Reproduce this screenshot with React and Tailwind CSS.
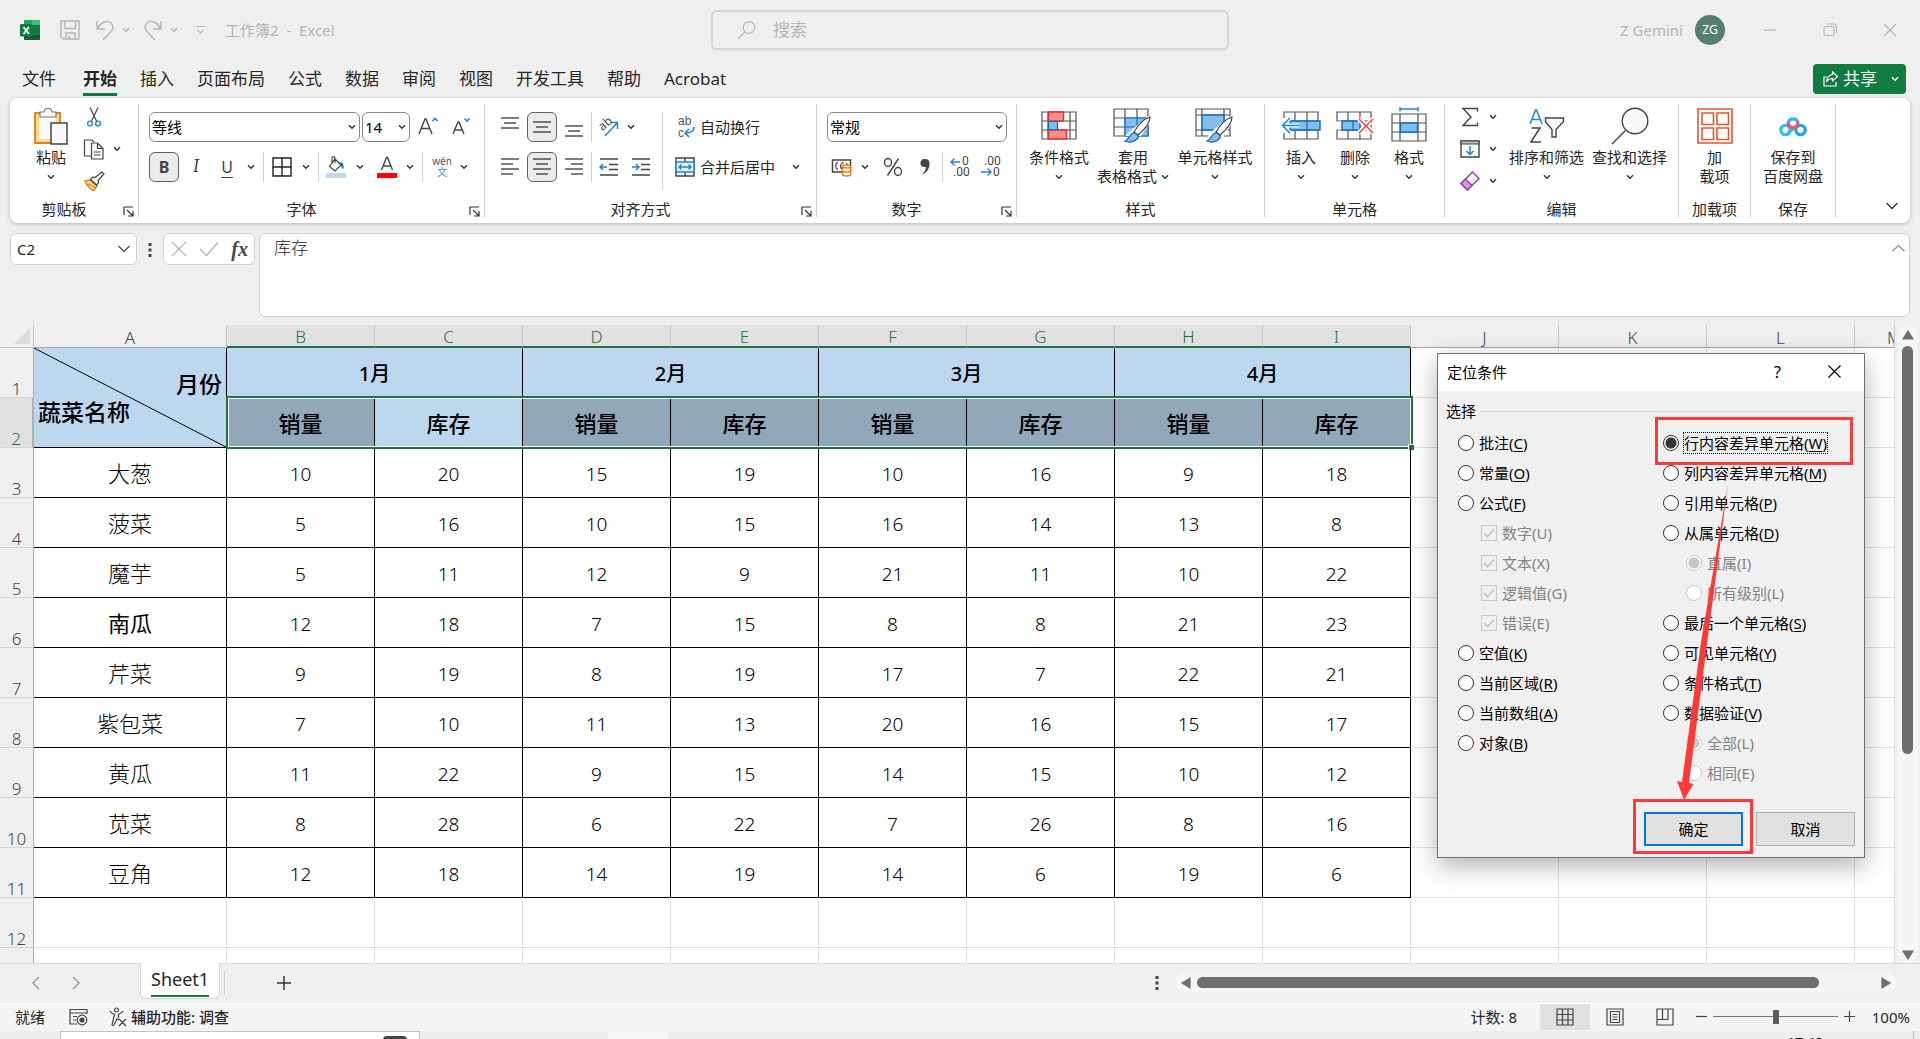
import React, { useState } from 'react';
import clsx from 'clsx';

const TABS = ['文件', '开始', '插入', '页面布局', '公式', '数据', '审阅', '视图', '开发工具', '帮助', 'Acrobat'];
const COLUMNS = ['A', 'B', 'C', 'D', 'E', 'F', 'G', 'H', 'I', 'J', 'K', 'L', 'M'];
const MONTHS = ['1月', '2月', '3月', '4月'];

const ROWS = [
  { name: '大葱', values: [10, 20, 15, 19, 10, 16, 9, 18] },
  { name: '菠菜', values: [5, 16, 10, 15, 16, 14, 13, 8] },
  { name: '魔芋', values: [5, 11, 12, 9, 21, 11, 10, 22] },
  { name: '南瓜', values: [12, 18, 7, 15, 8, 8, 21, 23], strong: true },
  { name: '芹菜', values: [9, 19, 8, 19, 17, 7, 22, 21] },
  { name: '紫包菜', values: [7, 10, 11, 13, 20, 16, 15, 17] },
  { name: '黄瓜', values: [11, 22, 9, 15, 14, 15, 10, 12] },
  { name: '苋菜', values: [8, 28, 6, 22, 7, 26, 8, 16] },
  { name: '豆角', values: [12, 18, 14, 19, 14, 6, 19, 6] },
];

const LEFT_OPTIONS = [
  { text: '批注', hotkey: 'C' },
  { text: '常量', hotkey: 'O' },
  { text: '公式', hotkey: 'F' },
  { text: '数字', hotkey: 'U', type: 'checkbox' },
  { text: '文本', hotkey: 'X', type: 'checkbox' },
  { text: '逻辑值', hotkey: 'G', type: 'checkbox' },
  { text: '错误', hotkey: 'E', type: 'checkbox' },
  { text: '空值', hotkey: 'K' },
  { text: '当前区域', hotkey: 'R' },
  { text: '当前数组', hotkey: 'A' },
  { text: '对象', hotkey: 'B' },
];

const RIGHT_OPTIONS = [
  { text: '行内容差异单元格', hotkey: 'W' },
  { text: '列内容差异单元格', hotkey: 'M' },
  { text: '引用单元格', hotkey: 'P' },
  { text: '从属单元格', hotkey: 'D' },
  { text: '直属', hotkey: 'I', group: 'level', on: true },
  { text: '所有级别', hotkey: 'L', group: 'level' },
  { text: '最后一个单元格', hotkey: 'S' },
  { text: '可见单元格', hotkey: 'Y' },
  { text: '条件格式', hotkey: 'T' },
  { text: '数据验证', hotkey: 'V' },
  { text: '全部', hotkey: 'L', group: 'validation', on: true },
  { text: '相同', hotkey: 'E', group: 'validation' },
];

const Svg = ({ w, h, children, className = '' }) => (
  <svg
    width={w}
    height={h}
    viewBox={`0 0 ${w} ${h}`}
    fill="none"
    stroke="#444"
    strokeWidth="1.2"
    className={`shrink-0 overflow-visible ${className}`}
    aria-hidden="true"
  >
    {children}
  </svg>
);

const Chevron = ({ color = '#333' }) => (
  <Svg w={8} h={6}>
    <path d="M1 1.2 4 4.2 7 1.2" stroke={color} strokeWidth="1.4" />
  </Svg>
);

const Tool = ({ label, active, className = '', children }) => (
  <button
    type="button"
    aria-label={label}
    className={clsx(
      'flex h-[30px] shrink-0 items-center justify-center rounded-md',
      active && 'border border-[#616161] bg-[#ebebeb]',
      className
    )}
  >
    {children}
  </button>
);

const Drop = ({ label, className = 'w-4' }) => (
  <Tool label={label} className={className}>
    <Chevron />
  </Tool>
);

const Sep = ({ className = 'w-2' }) => (
  <div className={`flex h-[30px] shrink-0 justify-center ${className}`}>
    <div className="w-px bg-[#d1d1d1]" />
  </div>
);

const Combo = ({ label, value, className = '' }) => (
  <div className={`relative shrink-0 ${className}`}>
    <select
      aria-label={label}
      className="h-[30px] w-full appearance-none rounded-md border border-[#8a8a8a] bg-white pl-0.5 text-[15px] leading-5 text-black"
    >
      <option>{value}</option>
    </select>
    <span className="pointer-events-none absolute top-3 right-1">
      <Chevron />
    </span>
  </div>
);

const RibbonGroup = ({ title, launcher, className = '', children }) => (
  <>
    <section className={`flex shrink-0 flex-col ${className}`}>
      <div className="h-[101px]">{children}</div>
      <div className={clsx('relative h-5 text-center text-[15px] leading-5 whitespace-nowrap', launcher && 'pr-5')}>
        {title}
        {launcher && (
          <button type="button" aria-label={`${title}设置`} className="absolute right-1 bottom-0.5">
            <Svg w={11} h={11}>
              <path d="M1 9V1h9M4 4l5.5 5.5M10 5v5H5" stroke="#333" />
            </Svg>
          </button>
        )}
      </div>
    </section>
    <div className="my-[6px] w-px shrink-0 bg-[#d1d1d1]" />
  </>
);

const BigButton = ({ icon, lines, drop, className = '' }) => (
  <button type="button" className={`flex flex-col items-center pt-[9px] text-[15px] leading-[19px] whitespace-nowrap ${className}`}>
    <span className="mb-1 flex h-[37px] items-center">{icon}</span>
    <span>{lines[0]}</span>
    <span className="flex h-[19px] items-center gap-1">
      {lines[1]}
      {drop && <Chevron />}
    </span>
  </button>
);

const Lines = ({ rows }) => (
  <Svg w={20} h={20}>
    {rows.map(([x1, x2, y]) => (
      <path key={y} d={`M${x1} ${y}H${x2}`} strokeWidth="1.4" />
    ))}
  </Svg>
);

/* ---------- ribbon icons ---------- */

const ExcelLogo = () => (
  <svg width="20" height="20" viewBox="0 0 20 20" aria-hidden="true">
    <rect x="4" y="0" width="16" height="20" rx="1.5" fill="#107c41" />
    <path d="M5.500 0H12v5H4V1.500A1.500 1.500 0 0 1 5.500 0Z" fill="#21a366" />
    <path d="M12 0h6.500A1.500 1.500 0 0 1 20 1.500V5h-8Z" fill="#33c481" />
    <path d="M4 10h8v5H4Z" fill="#185c37" />
    <path d="M4 15h16v3.500a1.500 1.500 0 0 1-1.500 1.500h-13A1.500 1.500 0 0 1 4 18.500Z" fill="#185c37" />
    <rect x="0" y="4" width="12.500" height="12.500" rx="1.200" fill="#107c41" />
    <path d="m3.500 7 5.500 7M9 7l-5.500 7" stroke="#fff" strokeWidth="1.900" />
  </svg>
);

const PasteIcon = () => (
  <Svg w={36} h={38}>
    <path d="M2 6h25v30H2z" fill="#ffd98f" stroke="#e67f17" strokeWidth="1.8" />
    <path d="M6 9h17v23H6z" fill="#fafafa" stroke="none" />
    <path d="M7 10V5h4c1-5 7-5 8 0h4v5z" fill="#fafafa" stroke="#777" />
    <path d="M18 16h16v21H18z" fill="#fafafa" stroke="#444" strokeWidth="1.5" />
  </Svg>
);

const CutIcon = () => (
  <Svg w={16} h={20}>
    <path d="M4 .5 10.500 14M12 .5 5.500 14" />
    <circle cx="4" cy="16.500" r="2.400" stroke="#1a86d0" strokeWidth="1.400" />
    <circle cx="12" cy="16.500" r="2.400" stroke="#1a86d0" strokeWidth="1.400" />
  </Svg>
);

const CopyIcon = () => (
  <Svg w={22} h={21}>
    <path d="M8 17H1.500V1H9l2 2" />
    <path d="M8.500 4h6l5.500 5.500V20H8.500zM14.500 4v5.500H20M11 13h6.500M11 16h6.500" fill="#fafafa" />
  </Svg>
);

const PainterIcon = () => (
  <Svg w={21} h={20}>
    <path d="m1 10 5-1 7 6-3.500 4.500C6 18 3 14.500 1 10Z" fill="#ffd98f" stroke="#e67f17" strokeWidth="1.500" />
    <path d="m4 13 7 3.500" stroke="#e67f17" />
    <path d="M6.500 8.500 9 6l2 .5L18 1l2 2-6 6.500.5 2-2 2.500z" fill="#fff" />
  </Svg>
);

const FillIcon = () => (
  <Svg w={20} h={22}>
    <path d="m9 3 6 6-6 6-5.500-4.500zM9 7V2.500C9 0 6 0 6 2.500V7" />
    <path d="M14 6c3 0 4 3 3.500 7-2-.5-2.500-3-3.500-7Z" fill="#1a6fb5" stroke="none" />
    <path d="M0 17h20v5H0z" fill="#bdd7ee" stroke="none" />
  </Svg>
);

const FontColorIcon = () => (
  <Svg w={20} h={22}>
    <path d="M4.500 14 9.500 1.500h1l5 12.500M6.500 10h7" strokeWidth="1.400" />
    <path d="M0 17h20v5H0z" fill="#f00" stroke="none" />
  </Svg>
);

const BordersIcon = () => (
  <Svg w={20} h={20}>
    <path d="M1 1h18v18H1zM10 1v18M1 10h18" stroke="#222" strokeWidth="1.400" />
  </Svg>
);

const OrientationIcon = () => (
  <Svg w={22} h={22}>
    <text x="1" y="12" fontSize="12" transform="rotate(-40 7 9)" fill="#444" stroke="none" fontFamily="Noto Sans">ab</text>
    <path d="M7 20 19 7M13 6.500h6.500V13" stroke="#1a86d0" strokeWidth="1.500" />
  </Svg>
);

const IndentIcon = ({ out }) => (
  <Svg w={20} h={20}>
    <path d="M1 2h18M10 7.500h9M10 12.500h9M1 18h18" strokeWidth="1.400" />
    <path d={out ? 'M8 10H1.500M4 7 1 10l3 3' : 'M1 10h6.500M5 7l3 3-3 3'} stroke="#1a86d0" strokeWidth="1.500" />
  </Svg>
);

const WrapIcon = () => (
  <Svg w={20} h={22}>
    <text x="3" y="9" fontSize="12" fill="#555" stroke="none" fontFamily="Liberation Sans">ab</text>
    <text x="3" y="21" fontSize="12" fill="#555" stroke="none" fontFamily="Liberation Sans">c</text>
    <path d="M19 11c0 4-2 6-8 6M14 13l-4 4 4 4" stroke="#1a86d0" strokeWidth="1.500" />
  </Svg>
);

const MergeIcon = () => (
  <Svg w={20} h={20}>
    <path d="M1 1h18v18H1zM10 1v4M10 15v4" strokeWidth="1.500" />
    <path d="M1 5h18v10H1z" fill="#e2f1fb" stroke="#1a86d0" strokeWidth="1.500" />
    <path d="M4 10h12M6.500 7.500 4 10l2.500 2.500M13.500 7.500 16 10l-2.500 2.500" stroke="#1a86d0" strokeWidth="1.400" />
  </Svg>
);

const CurrencyIcon = () => (
  <Svg w={22} h={20}>
    <path d="M1.500 3h18v12h-18z" strokeWidth="1.500" />
    <path d="M7 6c-3-1-3 7 0 6M13 6c-4-1-4 5-2 6M16 6v2" />
    <path d="M11.500 9.500v8c0 2 8 2 8 0v-8c0-2-8-2-8 0Z" fill="#fff" stroke="#e67f17" strokeWidth="1.400" />
    <path d="M11.500 9.500c0 2 8 2 8 0M11.500 13.500c0 2 8 2 8 0" stroke="#e67f17" strokeWidth="1.400" />
  </Svg>
);

const DecimalIcon = ({ more }) => (
  <Svg w={22} h={22}>
    <text x={more ? 13 : 4} y="9" fontSize="12" fill="#444" stroke="none" fontFamily="Roboto">{more ? '0' : '.00'}</text>
    <text x={more ? 4 : 13} y="20" fontSize="12" fill="#444" stroke="none" fontFamily="Roboto">{more ? '.00' : '0'}</text>
    <path d={more ? 'M11 6H2M5.500 2.500 2 6l3.500 3.500' : 'M1 16h10M7.500 12.500 11 16l-3.500 3.500'} stroke="#1a86d0" strokeWidth="1.400" />
  </Svg>
);

const Grid = () => <path d="M1 1h34v27H1zM1 10h34M1 19h34M12 1v27M24 1v27" fill="#fafafa" stroke="#555" />;

const ConditionalIcon = () => (
  <Svg w={36} h={29}>
    <path d="M1 1h34v27H1zM1 10h34M1 19h34M7 1v27M29 1v27" fill="#fafafa" stroke="#555" />
    <path d="M7.500 1h15v9h-15zM7.500 19h18v9h-18z" fill="#ff8f8f" stroke="#dd2f2f" strokeWidth="1.400" />
    <path d="M7.500 10.500h9v8h-9z" fill="#83beec" stroke="#0f6cbd" />
  </Svg>
);

const Brush = () => (
  <>
    <path d="M12 33c4-1 4-6 8-8 4-1 7 3 4 6-3 3-8 4-12 2Z" fill="#83beec" stroke="#0f6cbd" />
    <path d="M21 24c4-7 10-13 16-15 0 6-6 13-12 18Z" fill="#fff" stroke="#444" />
  </>
);

const TableStyleIcon = () => (
  <Svg w={40} h={35}>
    <Grid />
    <path d="M12 10h23v18H12z" fill="#83beec" stroke="none" />
    <path d="M12 28V10h23v18zM24 10v18M12 19h23" stroke="#0f6cbd" />
    <path d="M16 24 38 6v7L28 28H12Z" fill="#fff" stroke="none" />
    <Brush />
  </Svg>
);

const CellStyleIcon = () => (
  <Svg w={40} h={35}>
    <path d="M1 1h34v27H1zM1 7h34M1 22h34M7 1v27M29 1v27" fill="#fafafa" stroke="#555" />
    <path d="M7 7h22v15H7z" fill="#83beec" stroke="#0f6cbd" strokeWidth="1.400" />
    <path d="M16 24 38 6v7L28 30H12Z" fill="#fff" stroke="none" />
    <Brush />
  </Svg>
);

const InsertIcon = () => (
  <Svg w={40} h={29}>
    <path d="M3 1h34v27H3zM3 10h34M3 19h34M14 1v27M26 1v27" fill="#fafafa" stroke="#555" />
    <path d="M9 10h30v9H9z" fill="#83beec" stroke="#0f6cbd" strokeWidth="1.400" />
    <path d="M26 10v9" stroke="#0f6cbd" />
    <path d="M0 7h5v15H0z" fill="#fff" stroke="none" />
    <path d="M18 14.500H1.500M9 7l-7.500 7.500L9 22" stroke="#fff" strokeWidth="4" />
    <path d="M18 14.500H1.500M9 7l-7.500 7.500L9 22" stroke="#1a86d0" strokeWidth="1.500" />
  </Svg>
);

const DeleteIcon = () => (
  <Svg w={38} h={29}>
    <Grid />
    <path d="M0 10.500h6v8H0z" fill="#fff" stroke="none" />
    <path d="M6 10h18v9H6z" fill="#83beec" stroke="#0f6cbd" strokeWidth="1.400" />
    <path d="M17 10v9" stroke="#0f6cbd" />
    <path d="m23 8 14 14M37 8 23 22" stroke="#fff" strokeWidth="5" />
    <path d="m23 8 14 14M37 8 23 22" stroke="#f04747" strokeWidth="1.600" />
  </Svg>
);

const FormatIcon = () => (
  <Svg w={36} h={36} className="mb-1">
    <g transform="translate(0 7)">
      <path d="M1 1h34v27H1zM1 10h34M1 19h34M9 1v27M27 1v27" fill="#fafafa" stroke="#555" />
      <path d="M9.500 10h17v9h-17z" fill="#83beec" stroke="#0f6cbd" strokeWidth="1.400" />
    </g>
    <path d="M9 3h18M9 1v4.500M27 1v4.500" stroke="#1a86d0" strokeWidth="1.400" />
  </Svg>
);

const SigmaIcon = () => (
  <Svg w={18} h={20}>
    <path d="M16.500 4.500V1.500H2L10 10l-8 8.500h14.500v-3" strokeWidth="1.400" />
  </Svg>
);

const FillDownIcon = () => (
  <Svg w={20} h={18}>
    <path d="M1 1h18v16H1z" fill="#fafafa" strokeWidth="1.400" />
    <path d="M1 1h18v3H1z" fill="#bbb" />
    <path d="M10 6v8M6.500 11l3.500 3.500 3.500-3.500" stroke="#1a86d0" strokeWidth="1.500" />
  </Svg>
);

const EraserIcon = () => (
  <Svg w={20} h={20}>
    <path d="M1 12.500 12.500 1 19 7.500 7.500 19z" fill="#fafafa" stroke="#9a3ca5" strokeWidth="1.400" />
    <path d="M1 12.500 5.500 8l6.500 6.500L7.500 19z" fill="#d59bdc" stroke="#9a3ca5" strokeWidth="1.400" />
  </Svg>
);

const SortIcon = () => (
  <Svg w={36} h={36}>
    <path d="M1 16 6.500 2h1L13 16M3 11.500h8" stroke="#1a86d0" strokeWidth="1.500" />
    <path d="M2.500 20H11L2 34h10" strokeWidth="1.500" />
    <path d="M16.500 10h18v3.500L27 21.500V29h-4v-7.500l-6.500-8z" fill="#fafafa" strokeWidth="1.400" />
  </Svg>
);

const FindIcon = () => (
  <Svg w={38} h={38}>
    <circle cx="24" cy="14" r="12.800" fill="#fafafa" strokeWidth="1.400" />
    <path d="M14.500 23.500 1 37" strokeWidth="1.500" />
  </Svg>
);

const AddinsIcon = () => (
  <Svg w={36} h={36}>
    <path d="M1 1h34v34H1zM5 5h11.500v11.500H5zM20 5h11.500v11.500H20zM5 20h11.500v11.500H5zM20 20h11.500v11.500H20z" stroke="#e0592a" strokeWidth="1.600" />
  </Svg>
);

const BaiduIcon = () => (
  <Svg w={28} h={22}>
    <circle cx="6.500" cy="15" r="4.700" stroke="#2fc0f5" strokeWidth="3.300" />
    <circle cx="21.500" cy="15" r="4.700" stroke="#1aa5fa" strokeWidth="3.300" />
    <path d="m9 18 6-5.500" stroke="#2fb4f7" strokeWidth="3.300" />
    <path d="M9.300 7.500a4.900 4.900 0 0 1 9.500 0" stroke="#33b7f6" strokeWidth="3.300" />
    <path d="M9.300 7a4.800 4.800 0 1 0 9.400 0" stroke="#f9506e" strokeWidth="3.300" />
  </Svg>
);

/* ---------- window sections ---------- */

const TitleBar = () => (
  <header className="flex h-[60px] shrink-0 items-center pl-5 text-[#b5b5b5]">
    <div className="flex min-w-0 flex-1 items-center">
      <ExcelLogo />
      <button type="button" aria-label="保存" className="ml-5">
        <Svg w={20} h={20}>
          <path d="M1 1h18v18H3.500L1 16.500zM5 1v7.500h10.500V1M6 19v-6h9v6M9 19v-3.500" stroke="#b5b5b5" strokeWidth="1.400" />
        </Svg>
      </button>
      <button type="button" aria-label="撤消" className="ml-4">
        <Svg w={18} h={21}>
          <path d="M1 1v8h8M1.500 8.500C5 2 11-.500 15 3c3 3.500 2 6.500-.500 9L7 20" stroke="#b5b5b5" strokeWidth="1.400" />
        </Svg>
      </button>
      <span className="ml-2 flex w-2"><Chevron color="#b5b5b5" /></span>
      <button type="button" aria-label="恢复" className="ml-[14px]">
        <Svg w={18} h={21}>
          <path d="M17 1v8H9M16.500 8.500C13 2 7-.500 3 3c-3 3.500-2 6.500.500 9L11 20" stroke="#b5b5b5" strokeWidth="1.400" />
        </Svg>
      </button>
      <span className="ml-2 flex w-2"><Chevron color="#b5b5b5" /></span>
      <button type="button" aria-label="自定义快速访问工具栏" className="ml-[18px]">
        <Svg w={9} h={10}>
          <path d="M0 1.500h9M1.500 5l3 3 3-3" stroke="#b5b5b5" />
        </Svg>
      </button>
      <h1 className="ml-5 text-[15px] whitespace-pre">工作簿2  -  Excel</h1>
    </div>
    <label className="flex h-10 w-[518px] items-center rounded-md border-2 border-[#d6d6d6] pl-6 shadow-xs">
      <Svg w={20} h={20}>
        <circle cx="12" cy="7.500" r="5.800" stroke="#b5b5b5" />
        <path d="M8 12 1 19" stroke="#b5b5b5" />
      </Svg>
      <input aria-label="搜索" placeholder="搜索" className="ml-4 min-w-0 flex-1 bg-transparent text-[17px] outline-none placeholder:text-[#b5b5b5]" />
    </label>
    <div className="flex min-w-0 flex-1 items-center justify-end">
      <span className="text-[15px]">Z Gemini</span>
      <span className="ml-3 flex size-[30px] items-center justify-center rounded-full bg-[#567d72] text-xs text-white">ZG</span>
      <div className="ml-[15px] flex">
        <button type="button" aria-label="最小化" className="flex h-8 w-[60px] items-center justify-center">
          <Svg w={14} h={14}><path d="M1 7h12" stroke="#b5b5b5" /></Svg>
        </button>
        <button type="button" aria-label="还原" className="flex h-8 w-[60px] items-center justify-center">
          <Svg w={14} h={14}>
            <path d="M3 3.500h6.500q1.500 0 1.500 1.500v6q0 1.500-1.500 1.500h-7Q1 12.500 1 11V5q0-1.500 2-1.500ZM4 1h6q3.500 0 3.500 3.500V10" stroke="#b5b5b5" />
          </Svg>
        </button>
        <button type="button" aria-label="关闭" className="flex h-8 w-[60px] items-center justify-center">
          <Svg w={14} h={14}><path d="m1 1 12 12M13 1 1 13" stroke="#b5b5b5" /></Svg>
        </button>
      </div>
    </div>
  </header>
);

const TabBar = () => (
  <nav className="flex h-[38px] shrink-0 items-start justify-between pt-1 pr-[14px] pl-[22px]">
    <div className="flex gap-[23px] text-[17px] leading-[30px] whitespace-nowrap">
      {TABS.map((tab, i) => (
        <a
          key={tab}
          href="#"
          className={clsx('h-8', i === 1 && 'ml-1 border-b-3 border-[#107c41] font-bold')}
        >
          {tab}
        </a>
      ))}
    </div>
    <button type="button" className="flex h-[30px] items-center rounded bg-[#107c41] pr-[7px] pl-2.5 text-[17px] text-white">
      <Svg w={15} h={16}>
        <path d="M4 6H1v9h12v-4M9.500 1l5 4.500-5 4.500V7.500C7 7.500 5 8.500 3.500 11 4 7 6 4 9.500 3.500z" stroke="#fff" />
      </Svg>
      <span className="mr-3.5 ml-[5px]">共享</span>
      <Chevron color="#fff" />
    </button>
  </nav>
);

const IconColumn = ({ items }) => (
  <div className="flex flex-col pt-[3px]">
    {items.map(([label, icon, drop]) => (
      <div key={label} className="flex h-8 items-center">
        <Tool label={label} className="w-[26px]">{icon}</Tool>
        {drop && <Drop label={`${label}选项`} className="w-5" />}
      </div>
    ))}
  </div>
);

const Ribbon = () => (
  <div className="relative mx-2.5 flex h-[125px] shrink-0 rounded-lg bg-white shadow-[0_1px_4px_rgba(0,0,0,0.25)]">
    <RibbonGroup title="剪贴板" launcher className="w-32">
      <div className="flex pl-[11px]">
        <BigButton className="w-[60px]" icon={<PasteIcon />} lines={['粘贴']} drop />
        <IconColumn
          items={[
            ['剪切', <CutIcon />, false],
            ['复制', <CopyIcon />, true],
            ['格式刷', <PainterIcon />, false],
          ]}
        />
      </div>
    </RibbonGroup>

    <RibbonGroup title="字体" launcher className="w-[345px]">
      <div className="flex flex-col gap-2.5 pt-[14px] pl-2.5">
        <div className="flex">
          <Combo label="字体" value="等线" className="w-[211px]" />
          <Combo label="字号" value="14" className="ml-0.5 w-12" />
          <Tool label="增大字号" className="w-9">
            <Svg w={20} h={20}>
              <path d="M1 17 7 2h1l6 15M3.500 11.500h8.500" strokeWidth="1.400" />
              <path d="M14.500 4 17 1.500 19.500 4" stroke="#1a86d0" strokeWidth="1.600" />
            </Svg>
          </Tool>
          <Tool label="减小字号" className="w-[30px]">
            <Svg w={20} h={20}>
              <path d="M2 17 7 5h1l5 12M4 13h7" strokeWidth="1.400" />
              <path d="M13.500 1.500 16 4l2.500-2.500" stroke="#1a86d0" strokeWidth="1.600" />
            </Svg>
          </Tool>
        </div>
        <div className="flex">
          <Tool label="加粗" active className="w-[30px] text-base font-bold text-[#444]">B</Tool>
          <Tool label="倾斜" className="w-[34px] font-serif text-lg text-[#444] italic">I</Tool>
          <Tool label="下划线" className="w-7 text-base text-[#444] underline underline-offset-4">U</Tool>
          <Drop label="下划线选项" className="w-5" />
          <Sep className="w-[5px]" />
          <Tool label="边框" className="w-8"><BordersIcon /></Tool>
          <Drop label="边框选项" />
          <Sep />
          <Tool label="填充颜色" className="w-7"><FillIcon /></Tool>
          <Drop label="填充颜色选项" className="w-5" />
          <Tool label="字体颜色" className="w-[34px]"><FontColorIcon /></Tool>
          <Drop label="字体颜色选项" className="w-3" />
          <Sep className="w-3" />
          <Tool label="拼音" className="w-7 flex-col text-[10px] leading-[11px] text-[#555]">
            <span>wén</span>
            <span className="text-[#3a96dd]">文</span>
          </Tool>
          <Drop label="拼音选项" />
        </div>
      </div>
    </RibbonGroup>

    <RibbonGroup title="对齐方式" launcher className="w-[331px]">
      <div className="flex pt-[14px] pl-[9px]">
        <div className="flex flex-col gap-2.5">
          <div className="flex">
            <Tool label="顶端对齐" className="w-8"><Lines rows={[[1, 19, 1], [4, 16, 6], [1, 19, 11]]} /></Tool>
            <Tool label="垂直居中" active className="mx-px w-[30px]"><Lines rows={[[1, 19, 5], [4, 16, 10], [1, 19, 15]]} /></Tool>
            <Tool label="底端对齐" className="w-8"><Lines rows={[[1, 19, 9], [4, 16, 14], [1, 19, 19]]} /></Tool>
            <Sep className="w-[3px]" />
            <Tool label="方向" className="w-8"><OrientationIcon /></Tool>
            <Drop label="方向选项" className="w-3" />
          </div>
          <div className="flex">
            <Tool label="左对齐" className="w-8"><Lines rows={[[1, 19, 2], [1, 13, 7], [1, 19, 12], [1, 13, 17]]} /></Tool>
            <Tool label="居中" active className="mx-px w-[30px]"><Lines rows={[[1, 19, 2], [4, 16, 7], [1, 19, 12], [4, 16, 17]]} /></Tool>
            <Tool label="右对齐" className="w-8"><Lines rows={[[1, 19, 2], [7, 19, 7], [1, 19, 12], [7, 19, 17]]} /></Tool>
            <Sep className="w-[3px]" />
            <Tool label="减少缩进量" className="w-8"><IndentIcon out /></Tool>
            <Tool label="增加缩进量" className="w-8"><IndentIcon /></Tool>
          </div>
        </div>
        <div className="ml-[5px] h-[78px] w-px bg-[#d1d1d1]" />
        <div className="flex flex-col gap-2.5 pl-3 text-[15px] whitespace-nowrap">
          <button type="button" className="flex h-[30px] items-center gap-[5px]">
            <WrapIcon />
            自动换行
          </button>
          <button type="button" className="flex h-[30px] items-center gap-[5px]">
            <MergeIcon />
            合并后居中
            <span className="ml-3"><Chevron /></span>
          </button>
        </div>
      </div>
    </RibbonGroup>

    <RibbonGroup title="数字" launcher className="w-[199px]">
      <div className="flex flex-col gap-2.5 pt-[14px] pl-2.5">
        <Combo label="数字格式" value="常规" className="w-[180px]" />
        <div className="flex">
          <Tool label="会计数字格式" className="w-[30px]"><CurrencyIcon /></Tool>
          <Drop label="会计数字格式选项" />
          <Tool label="百分比样式" className="w-10">
            <Svg w={20} h={20}>
              <path d="M15.500 1.500 4.500 18.500" strokeWidth="1.400" />
              <ellipse cx="5" cy="5.500" rx="3.500" ry="4" strokeWidth="1.400" />
              <ellipse cx="15" cy="14.500" rx="3.500" ry="4" strokeWidth="1.400" />
            </Svg>
          </Tool>
          <Tool label="千位分隔样式" className="w-6">
            <Svg w={12} h={18}>
              <path d="M6 1a4 4 0 1 1-1 8 3.900 3.900 0 0 1 1-8Zm0 0c5 0 5.500 5 3.500 9.500Q8 14.500 3 16.500q4-4 4-8z" fill="#444" stroke="none" />
            </Svg>
          </Tool>
          <Sep className="w-2.5" />
          <Tool label="增加小数位数" className="w-[26px]"><DecimalIcon more /></Tool>
          <Tool label="减少小数位数" className="w-9"><DecimalIcon /></Tool>
        </div>
      </div>
    </RibbonGroup>

    <RibbonGroup title="样式" className="w-[247px]">
      <div className="flex pl-[6px]">
        <BigButton className="w-[72px]" icon={<ConditionalIcon />} lines={['条件格式']} drop />
        <BigButton className="w-[76px]" icon={<TableStyleIcon />} lines={['套用', '表格格式']} drop />
        <BigButton className="w-[88px]" icon={<CellStyleIcon />} lines={['单元格样式']} drop />
      </div>
    </RibbonGroup>

    <RibbonGroup title="单元格" className="w-[179px]">
      <div className="flex pl-[9px]">
        <BigButton className="w-[54px]" icon={<InsertIcon />} lines={['插入']} drop />
        <BigButton className="w-[54px]" icon={<DeleteIcon />} lines={['删除']} drop />
        <BigButton className="w-[54px]" icon={<FormatIcon />} lines={['格式']} drop />
      </div>
    </RibbonGroup>

    <RibbonGroup title="编辑" className="w-[233px]">
      <div className="flex pl-3">
        <IconColumn
          items={[
            ['自动求和', <SigmaIcon />, true],
            ['填充', <FillDownIcon />, true],
            ['清除', <EraserIcon />, true],
          ]}
        />
        <div className="flex pl-0.5">
          <BigButton className="w-[83px]" icon={<SortIcon />} lines={['排序和筛选']} drop />
          <BigButton className="w-[83px]" icon={<FindIcon />} lines={['查找和选择']} drop />
        </div>
      </div>
    </RibbonGroup>

    <RibbonGroup title="加载项" className="w-[71px]">
      <BigButton className="w-full" icon={<AddinsIcon />} lines={['加', '载项']} />
    </RibbonGroup>

    <RibbonGroup title="保存" className="w-[84px]">
      <BigButton className="w-full" icon={<BaiduIcon />} lines={['保存到', '百度网盘']} />
    </RibbonGroup>

    <button type="button" aria-label="折叠功能区" className="mr-3 mb-[13px] ml-auto self-end">
      <Svg w={12} h={8}><path d="m.500 1 5.500 5.500L11.500 1" stroke="#333" strokeWidth="1.400" /></Svg>
    </button>
  </div>
);

const FormulaBar = () => (
  <div className="mt-2.5 flex h-[92px] shrink-0 items-start pr-2.5 pb-2 pl-2.5">
    <div className="flex h-8 w-[127px] items-center rounded-md border border-[#d1d1d1] bg-white pr-[6px] pl-[6px]">
      <input aria-label="名称框" defaultValue="C2" className="min-w-0 flex-1 bg-transparent text-[15px] outline-none" />
      <Svg w={12} h={8}><path d="m.500 1 5.500 5.500L11.500 1" stroke="#444" /></Svg>
    </div>
    <Svg w={4} h={14} className="mx-[11px] mt-[10px]">
      <path d="M.500 0h3v3h-3zM.500 5.500h3v3h-3zM.500 11h3v3h-3z" fill="#444" stroke="none" />
    </Svg>
    <div className="flex h-8 w-[92px] items-center justify-between rounded-md border border-[#d1d1d1] bg-white pr-[6px] pl-[7px]">
      <button type="button" aria-label="取消输入">
        <Svg w={16} h={16}><path d="m1 1 14 14M15 1 1 15" stroke="#b5b5b5" /></Svg>
      </button>
      <button type="button" aria-label="输入">
        <Svg w={20} h={16}><path d="m1 8 6.500 6.500L19 1.500" stroke="#b5b5b5" strokeWidth="1.400" /></Svg>
      </button>
      <button type="button" aria-label="插入函数" className="font-['Liberation_Serif',serif] text-xl leading-6 font-bold text-[#444] italic">fx</button>
    </div>
    <div className="ml-1 flex h-[84px] flex-1 items-start rounded-md border border-[#d1d1d1] bg-white">
      <textarea aria-label="编辑栏" defaultValue="库存" className="h-full flex-1 resize-none px-3.5 text-[17px] leading-[28px] font-light outline-none" />
      <button type="button" aria-label="折叠编辑栏" className="mt-2.5 mr-1">
        <Svg w={13} h={8}><path d="m.500 7 6-5.500 6 5.500" stroke="#888" /></Svg>
      </button>
    </div>
  </div>
);

const RowHeader = ({ n, selected }) => (
  <th
    className={clsx(
      'border-r border-b border-r-[#b1b1b1] border-b-[#d4d4d4] p-0 align-bottom text-[17px] leading-4 font-light',
      selected ? 'border-r-2 border-r-[#217346] bg-[#e1e1e1] text-[#217346]' : 'bg-[#efefef] text-[#444]'
    )}
  >
    {n}
  </th>
);

const EmptyCells = ({ count }) =>
  Array.from({ length: count }, (_, i) => <td key={i} className="border-r border-b border-[#e0e0e0]" />);

const Sheet = () => (
  <div className="relative min-w-0 flex-1 overflow-hidden bg-white">
    <table className="w-full table-fixed border-separate border-spacing-0 text-center">
      <colgroup>
        <col className="w-[34px]" />
        <col className="w-[193px]" />
        {COLUMNS.slice(1, 12).map((c) => <col key={c} className="w-[148px]" />)}
        <col />
      </colgroup>
      <thead>
        <tr className="h-[23px]">
          <th className="border-r border-b border-[#c6c6c6] bg-[#efefef]">
            <Svg w={16} h={16} className="ml-auto mr-[3px]">
              <path d="M16 0v16H0z" fill="#dcdcdc" stroke="none" />
            </Svg>
          </th>
          {COLUMNS.map((c, i) => {
            const selected = i > 0 && i < 9;
            return (
              <th
                key={c}
                className={clsx(
                  'h-[23px] border-r border-r-[#c6c6c6] p-0 pt-[3px] text-[17px] leading-[18px] font-light',
                  selected ? 'border-b-2 border-b-[#217346] bg-[#e1e1e1] text-[#217346]' : 'border-b border-b-[#a6a6a6] bg-[#efefef] text-[#444]',
                  c === 'M' && 'overflow-hidden pl-8 text-left'
                )}
              >
                {c}
              </th>
            );
          })}
        </tr>
      </thead>
      <tbody className="text-black">
        <tr className="h-[50px]">
          <RowHeader n={1} />
          <td rowSpan={2} className="relative border-r border-b border-black bg-[#bdd7ee] p-0 text-[23px] leading-7 font-medium">
            <svg className="absolute inset-0 size-full" viewBox="0 0 192 99" preserveAspectRatio="none" aria-hidden="true">
              <path d="M0 0 192 99" stroke="#000" strokeWidth="1" />
            </svg>
            <div className="pr-1 text-right">月份</div>
            <div className="pl-1 text-left">蔬菜名称</div>
          </td>
          {MONTHS.map((m) => (
            <td key={m} colSpan={2} className="border-r border-b border-black bg-[#bdd7ee] p-0 pt-0.5 text-xl font-medium">{m}</td>
          ))}
          <EmptyCells count={4} />
        </tr>
        <tr className="h-[50px]">
          <RowHeader n={2} selected />
          {Array.from({ length: 8 }, (_, i) => (
            <td
              key={i}
              className={clsx('border-r border-b border-black p-0 text-[22px] leading-8 font-medium', i === 1 ? 'bg-[#bdd7ee]' : 'bg-[#93a7bb]')}
            >
              {i % 2 === 0 ? '销量' : '库存'}
            </td>
          ))}
          <EmptyCells count={4} />
        </tr>
        {ROWS.map((row, r) => (
          <tr key={row.name} className="h-[50px]">
            <RowHeader n={r + 3} />
            <td className={clsx('border-r border-b border-black p-0 text-[22px] leading-8', row.strong ? 'font-normal' : 'font-light')}>{row.name}</td>
            {row.values.map((v, i) => (
              <td key={i} className="border-r border-b border-black p-0 pt-0.5 text-[19px] leading-8 font-light">{v}</td>
            ))}
            <EmptyCells count={4} />
          </tr>
        ))}
        {[12, 13].map((n) => (
          <tr key={n} className="h-[50px]">
            <RowHeader n={n === 12 ? n : ''} />
            <EmptyCells count={13} />
          </tr>
        ))}
      </tbody>
    </table>
    {/* selection frame around B2:I2 */}
    <div className="pointer-events-none absolute top-[71px] left-[226px] h-[53px] w-[1187px] border-2 border-[#217346]">
      <div className="size-full border border-white" />
      <span className="absolute -right-[3px] -bottom-[3px] size-[6px] border-t border-l border-white bg-[#217346]" />
    </div>
  </div>
);

const VerticalScroll = () => (
  <div className="flex w-[25px] shrink-0 justify-center bg-[#efefef]">
    <div className="flex w-5 flex-col items-center rounded-full bg-[#f5f5f5] pt-[5px] pb-[3px]">
      <Svg w={12} h={10}><path d="M6 1 11 9H1z" fill="#6e6e6e" stroke="#6e6e6e" /></Svg>
      <div className="mt-[6px] h-[408px] w-[11px] rounded-full bg-[#6e6e6e]" />
      <Svg w={12} h={10} className="mt-auto"><path d="M6 9 11 1H1z" fill="#6e6e6e" stroke="#6e6e6e" /></Svg>
    </div>
  </div>
);

const SheetTabs = () => (
  <div className="flex h-10 shrink-0 items-start border-t border-[#dcdcdc] pr-[23px]">
    <button type="button" aria-label="上一张" className="ml-8 h-[38px]">
      <Svg w={8} h={14}><path d="M7 1 1 7l6 6" stroke="#999" strokeWidth="1.400" /></Svg>
    </button>
    <button type="button" aria-label="下一张" className="ml-8 h-[38px]">
      <Svg w={8} h={14}><path d="m1 1 6 6-6 6" stroke="#999" strokeWidth="1.400" /></Svg>
    </button>
    <button type="button" className="-mt-px ml-[60px] h-9 rounded-b-md border border-t-0 border-[#d6d6d6] bg-white px-2.5 text-lg leading-7">
      <span className="block h-[33px] border-b-2 border-[#107c41] pt-px">Sheet1</span>
    </button>
    <div className="mt-[7px] ml-1 h-6 w-px bg-[#d1d1d1]" />
    <button type="button" aria-label="新工作表" className="ml-[52px] h-[38px]">
      <Svg w={14} h={14}><path d="M7 0v14M0 7h14" stroke="#333" strokeWidth="1.500" /></Svg>
    </button>
    <Svg w={4} h={14} className="mt-3 ml-auto">
      <path d="M.500 0h3v3h-3zM.500 5.500h3v3h-3zM.500 11h3v3h-3z" fill="#444" stroke="none" />
    </Svg>
    <div className="mt-2 ml-4 flex h-[21px] w-[722px] items-center rounded-full bg-[#f5f5f5] px-[6px]">
      <Svg w={10} h={12}><path d="M1 6 9 1v10z" fill="#6e6e6e" stroke="#6e6e6e" /></Svg>
      <div className="ml-[6px] h-[11px] w-[622px] rounded-full bg-[#6e6e6e]" />
      <Svg w={10} h={12} className="ml-auto"><path d="M9 6 1 1v10z" fill="#6e6e6e" stroke="#6e6e6e" /></Svg>
    </div>
  </div>
);

const StatusBar = () => (
  <footer className="flex h-7 shrink-0 items-center border-t border-white bg-[#f4f4f4] pr-2.5 pb-0.5 pl-[15px] text-[15px] leading-5 whitespace-nowrap">
    <span>就绪</span>
    <Svg w={20} h={18} className="ml-6">
      <path d="M8 16H1V1.500h17V6M1 5h17M4 8.500h4M4 12h3" />
      <circle cx="13" cy="12" r="4.800" />
      <circle cx="13" cy="12" r="2" fill="#444" />
    </Svg>
    <button type="button" className="ml-5 flex items-center gap-1 font-medium">
      <Svg w={18} h={20}>
        <circle cx="7.500" cy="3" r="2" />
        <path d="M1 4q1 2 4.500 3.500L3 18q1 1.500 2 0l3-6 1.500 1M14 4q-1 2-4.500 3.500V11M10 12l7 7M17 12l-7 7" />
      </Svg>
      辅助功能: 调查
    </button>
    <span className="ml-auto">计数: 8</span>
    <button type="button" aria-label="普通" className="ml-[23px] flex h-[26px] w-[50px] items-center justify-center bg-[#e0e0e0]">
      <Svg w={18} h={18}><path d="M1 1h16v16H1zM6.500 1v16M12 1v16M1 6.500h16M1 12h16" /></Svg>
    </button>
    <button type="button" aria-label="页面布局视图" className="flex h-[26px] w-[50px] items-center justify-center">
      <Svg w={18} h={18}><path d="M1 1h16v16H1zM4.500 3.500h9v11h-9zM6.500 6.500h5M6.500 9h5M6.500 11.500h5" /></Svg>
    </button>
    <button type="button" aria-label="分页预览" className="flex h-[26px] w-[50px] items-center justify-center">
      <Svg w={18} h={18}><path d="M1 1h16v16H1zM1 11.500h11V1M6.500 1v10.500" /></Svg>
    </button>
    <button type="button" aria-label="缩小" className="ml-[6px]">
      <Svg w={11} h={11}><path d="M0 5.500h11" /></Svg>
    </button>
    <input
      type="range"
      aria-label="缩放"
      defaultValue="50"
      className="mx-[6px] h-4 w-[125px] appearance-none bg-[linear-gradient(#777,#777)] bg-[length:100%_1px] bg-center bg-no-repeat [&::-webkit-slider-thumb]:h-[14px] [&::-webkit-slider-thumb]:w-[6px] [&::-webkit-slider-thumb]:appearance-none [&::-webkit-slider-thumb]:bg-[#5c5c5c]"
    />
    <button type="button" aria-label="放大">
      <Svg w={11} h={11}><path d="M0 5.500h11M5.500 0v11" /></Svg>
    </button>
    <span className="ml-[14px] w-[41px] text-right">100%</span>
  </footer>
);

const Taskbar = () => (
  <div className="flex h-2 shrink-0 items-start overflow-hidden bg-[#ededed] pl-[60px]">
    <div className="flex h-3 w-[360px] justify-end border border-[#c4c4c4] bg-white pt-1 pr-3">
      <div className="h-3 w-6 rounded bg-[#444]" />
    </div>
    <div className="ml-[188px] h-2 w-[60px] bg-[#f6f6f6]" />
    <span className="mt-[2px] mr-[91px] ml-auto text-sm leading-5 text-black">17:48</span>
    <div className="-ml-px mr-1.5 h-3 w-px bg-[#bbb]" />
  </div>
);

const Option = ({ text, hotkey, type = 'radio', group, on, focused }) => {
  const sub = type === 'checkbox' || Boolean(group);
  return (
    <label className={clsx('relative flex h-[30px] items-center gap-[5px] whitespace-nowrap', sub ? 'pl-[23px] text-[#838383]' : 'text-black')}>
      {type === 'checkbox' ? (
        <>
          <input type="checkbox" defaultChecked disabled className="size-4 shrink-0 appearance-none border border-[#c8c8c8] bg-transparent" />
          <Svg w={12} h={10} className="pointer-events-none absolute left-[25px]">
            <path d="m1 5 3.500 3.500L11 1.500" stroke="#c4c4c4" strokeWidth="1.600" />
          </Svg>
        </>
      ) : (
        <input
          type="radio"
          name={group || 'goto'}
          defaultChecked={on}
          disabled={sub}
          className="size-4 shrink-0 appearance-none rounded-full border border-[#333] bg-white checked:bg-[radial-gradient(circle,#333_5px,#fff_6px)] disabled:border-[#c8c8c8] disabled:checked:bg-[radial-gradient(circle,#c8c8c8_5px,#fff_6px)]"
        />
      )}
      <span className={clsx(focused && 'outline outline-dotted outline-black')}>
        {text}({sub ? hotkey : <u className="underline-offset-2">{hotkey}</u>})
      </span>
    </label>
  );
};

const GoToDialog = ({ onClose }) => (
  <div
    role="dialog"
    aria-label="定位条件"
    className="absolute top-[353px] right-[55px] w-[428px] border border-[#6f6f6f] bg-[#f0f0f0] text-[15px] leading-5 text-black shadow-[0_8px_24px_rgba(0,0,0,0.3)]"
  >
    <div className="flex h-[37px] items-center bg-white pr-[23px] pb-0.5 pl-[9px]">
      <span className="flex-1">定位条件</span>
      <button type="button" aria-label="帮助" className="mr-[47px] text-base">?</button>
      <button type="button" aria-label="关闭" onClick={onClose}>
        <Svg w={13} h={13}><path d="m.500.500 12 12M12.500.500l-12 12" stroke="#000" /></Svg>
      </button>
    </div>
    <div className="flex items-center gap-1 pt-2.5 pr-[9px] pl-2">
      <span>选择</span>
      <div className="h-px flex-1 bg-[#dcdcdc]" />
    </div>
    <div className="flex pt-[7px] pl-5">
      <div className="w-[205px]">
        {LEFT_OPTIONS.map((o) => <Option key={o.hotkey} {...o} />)}
      </div>
      <div>
        {RIGHT_OPTIONS.map((o, i) => <Option key={o.text} {...o} on={o.on || i === 0} focused={i === 0} />)}
      </div>
    </div>
    <div className="mt-6 mb-[11px] flex justify-end gap-[13px] pr-[9px]">
      <button type="button" onClick={onClose} className="h-[34px] w-[99px] border-2 border-[#0078d7] bg-[#e1e1e1]">确定</button>
      <button type="button" onClick={onClose} className="h-[34px] w-[99px] border border-[#adadad] bg-[#e1e1e1]">取消</button>
    </div>

    {/* callouts pointing at the chosen option and the confirm button */}
    <div className="pointer-events-none absolute top-[63px] left-[217px] h-12 w-[198px] border-3 border-[#fc3a38]" />
    <div className="pointer-events-none absolute top-[445px] left-[195px] h-[55px] w-[120px] border-3 border-[#fc3a38]" />
    <svg className="pointer-events-none absolute top-[130px] left-[230px]" width="70" height="320" viewBox="0 0 70 320" aria-hidden="true">
      <path d="M60 0 39 160 21 299l4.500 1L16 316 9 297l5 1 19-140Z" fill="#fc3a38" />
    </svg>
  </div>
);

export default function App() {
  const [dialogOpen, setDialogOpen] = useState(true);

  return (
    <div className="relative flex h-screen flex-col overflow-hidden bg-[#efefef] font-['Noto_Sans','Noto_Sans_CJK_SC',sans-serif] text-[#262626]">
      <TitleBar />
      <TabBar />
      <Ribbon />
      <FormulaBar />
      <div className="flex min-h-0 flex-1">
        <Sheet />
        <VerticalScroll />
      </div>
      <SheetTabs />
      <StatusBar />
      <Taskbar />
      {dialogOpen && <GoToDialog onClose={() => setDialogOpen(false)} />}
    </div>
  );
}
